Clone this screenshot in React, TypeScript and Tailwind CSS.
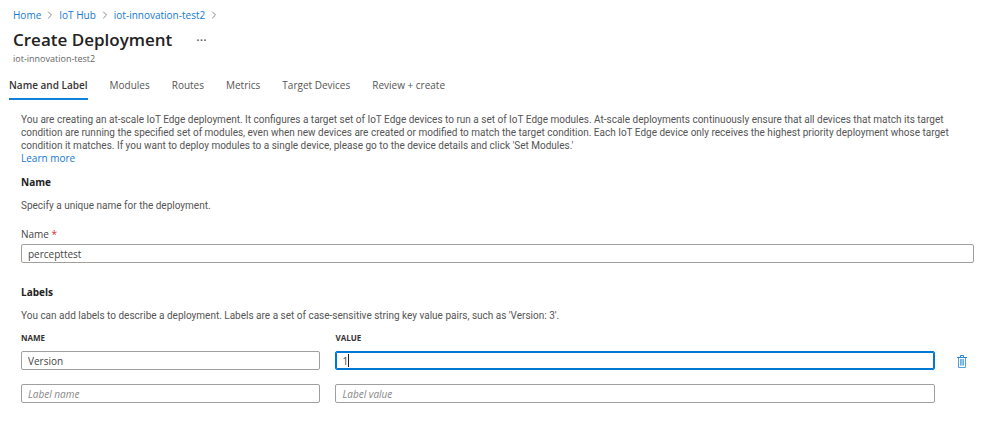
import { useState } from 'react'
import { ChevronRight } from 'lucide-react'

type Label = { name: string; value: string }

const breadcrumbs = ['Home', 'IoT Hub', 'iot-innovation-test2']

const tabs = [
  'Name and Label',
  'Modules',
  'Routes',
  'Metrics',
  'Target Devices',
  'Review + create',
]

const inputClass =
  'block h-[19px] w-full rounded-xs border border-[#a19f9d] bg-white px-1.5 text-[#444] placeholder:text-[#888] placeholder:italic focus:border-[#0078d4] focus:ring-1 focus:ring-[#0078d4] focus:outline-none focus:ring-inset'

const headingClass = 'leading-4 font-bold text-[#222]'

const bodyClass = 'font-[Roboto,sans-serif] text-[#555]'

function TrashIcon() {
  return (
    <svg viewBox="0 0 12 14" className="h-3.5 w-3" fill="none" stroke="#2b8ad8">
      <path d="M1 3.5h10M4.5 3v-1.5h3v1.5" />
      <path d="M2.5 4v9.5h7v-9.5" strokeOpacity="0.8" />
      <path d="M4 5h4v6.5h-4z" fill="#2b8ad8" fillOpacity="0.5" stroke="none" />
      <path d="M4.5 5v6.5M7.5 5v6.5" strokeOpacity="0.4" />
    </svg>
  )
}

export default function App() {
  const [activeTab, setActiveTab] = useState(tabs[0])
  const [name, setName] = useState('percepttest')
  const [labels, setLabels] = useState<Label[]>([
    { name: 'Version', value: '1' },
    { name: '', value: '' },
  ])

  function updateLabel(index: number, patch: Partial<Label>) {
    setLabels((all) => all.map((l, i) => (i === index ? { ...l, ...patch } : l)))
  }

  function removeLabel(index: number) {
    setLabels((all) => all.filter((_, i) => i !== index))
  }

  return (
    <div className="min-h-screen bg-white font-['Open_Sans',sans-serif] text-[10px] leading-[13px] text-[#444]">
      <header className="px-[13px] pt-[7px]">
        <nav aria-label="Breadcrumb" className="flex items-center leading-4">
          {breadcrumbs.map((crumb) => (
            <span key={crumb} className="flex items-center">
              <a href="#" className="text-[#1579d0] hover:underline">
                {crumb}
              </a>
              <ChevronRight className="mx-[3px] size-3 text-[#8a8886]" strokeWidth={2} />
            </span>
          ))}
        </nav>
        <div className="mt-[5px] flex items-center gap-6">
          <h1 className="text-[17px] leading-6 font-semibold text-[#222]">Create Deployment</h1>
          <button type="button" aria-label="More" className="text-[13px] text-[#444]">
            ···
          </button>
        </div>
        <p className="text-[9px] text-[#666]">iot-innovation-test2</p>
      </header>

      <div role="tablist" className="mt-3 flex gap-[22px] px-[9px] leading-4">
        {tabs.map((tab) => (
          <button
            key={tab}
            type="button"
            role="tab"
            aria-selected={tab === activeTab}
            onClick={() => setActiveTab(tab)}
            className={`border-b-2 pb-[5px] ${
              tab === activeTab
                ? 'border-[#1080d8] font-semibold text-[#333]'
                : 'border-transparent text-[#555]'
            }`}
          >
            {tab}
          </button>
        ))}
      </div>

      <main className="pt-[13px] pr-[25px] pl-[21px]">
        <p className={bodyClass}>
          You are creating an at-scale IoT Edge deployment. It configures a target set of IoT Edge
          devices to run a set of IoT Edge modules. At-scale deployments continuously ensure that
          all devices that match its target condition are running the specified set of modules, even
          when new devices are created or modified to match the target condition. Each IoT Edge
          device only receives the highest priority deployment whose target condition it matches. If
          you want to deploy modules to a single device, please go to the device details and click
          'Set Modules.'
        </p>
        <a href="#" className="block w-fit text-[#1579d0] hover:underline">
          Learn more
        </a>

        <section className="mt-[9px]">
          <h2 className={headingClass}>Name</h2>
          <p className={`mt-[9px] ${bodyClass}`}>Specify a unique name for the deployment.</p>
          <label htmlFor="deployment-name" className="mt-4 block">
            Name <span className="text-[#d13438]">*</span>
          </label>
          <input
            id="deployment-name"
            type="text"
            value={name}
            onChange={(e) => setName(e.target.value)}
            className={`mt-[3px] ${inputClass}`}
          />
        </section>

        <section className="mt-[21px]">
          <h2 className={headingClass}>Labels</h2>
          <p className={`mt-[9px] ${bodyClass}`}>
            You can add labels to describe a deployment. Labels are a set of case-sensitive string
            key value pairs, such as 'Version: 3'.
          </p>
          <table className="mt-[9px] w-full table-fixed">
            <thead className="text-left text-[8px] text-[#333] uppercase">
              <tr>
                <th className="w-[33%] font-bold">Name</th>
                <th className="w-[64.5%] font-bold">Value</th>
                <th aria-label="Actions" />
              </tr>
            </thead>
            <tbody>
              {labels.map((label, i) => (
                <tr key={i}>
                  <td className="py-[7px] pr-[15px]">
                    <input
                      type="text"
                      aria-label="Label name"
                      placeholder="Label name"
                      value={label.name}
                      onChange={(e) => updateLabel(i, { name: e.target.value })}
                      className={inputClass}
                    />
                  </td>
                  <td className="py-[7px] pr-[15px]">
                    <div className="relative">
                      <input
                        type="text"
                        aria-label="Label value"
                        placeholder="Label value"
                        autoFocus={i === 0}
                        value={label.value}
                        onChange={(e) => updateLabel(i, { value: e.target.value })}
                        className={`caret-transparent ${inputClass}`}
                      />
                      {i === 0 && (
                        <span className="pointer-events-none absolute top-[3px] left-[13px] h-[13px] w-px bg-[#222]" />
                      )}
                    </div>
                  </td>
                  <td>
                    {label.name && (
                      <button
                        type="button"
                        aria-label="Delete label"
                        onClick={() => removeLabel(i)}
                        className="mx-auto block"
                      >
                        <TrashIcon />
                      </button>
                    )}
                  </td>
                </tr>
              ))}
            </tbody>
          </table>
        </section>
      </main>
    </div>
  )
}
